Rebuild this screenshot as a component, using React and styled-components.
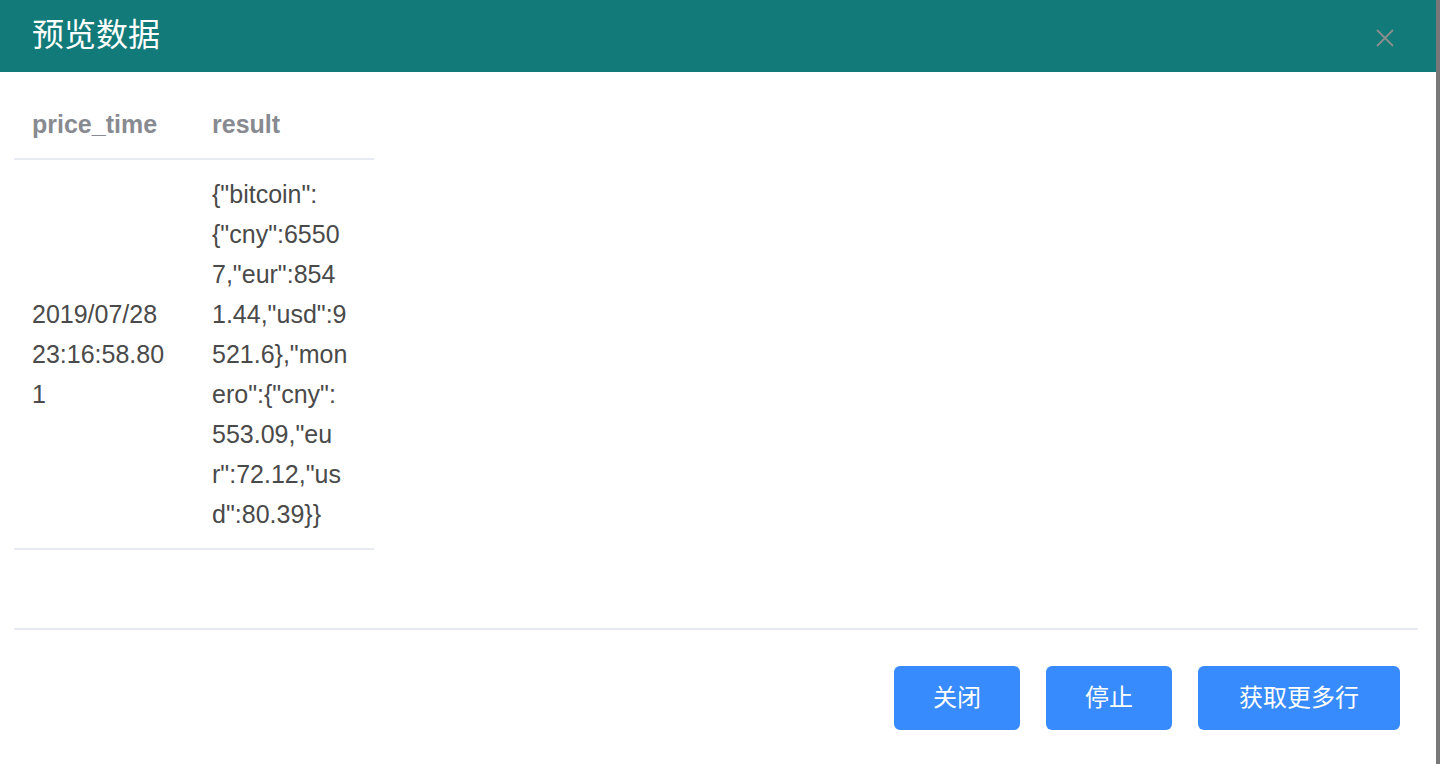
import React from "react";
import styled, { createGlobalStyle } from "styled-components";

const Global = createGlobalStyle`
  html, body { margin: 0; padding: 0; }
  body {
    background: #787878;
    font-family: "Liberation Sans", Arial, "Noto Sans CJK SC", sans-serif;
  }
`;

const Page = styled.div`
  height: 764px;
  display: flex;
`;

const Modal = styled.div`
  width: 1436px;
  height: 764px;
  background: #ffffff;
  display: flex;
  flex-direction: column;
`;

const Header = styled.div`
  height: 72px;
  flex: none;
  background: #127a78;
  display: flex;
  align-items: center;
  justify-content: space-between;
  padding: 0 40px 0 32px;
`;

const Title = styled.h1`
  margin: 0 0 8px 0;
  font-family: "Noto Sans CJK SC", sans-serif;
  font-weight: 400;
  font-size: 32px;
  color: #ffffff;
`;

const CloseButton = styled.button`
  border: 0;
  background: transparent;
  padding: 0;
  width: 22px;
  height: 22px;
  margin-top: 4px;
  display: flex;
  align-items: center;
  justify-content: center;
  cursor: pointer;
`;

const Body = styled.div`
  height: 558px;
  flex: none;
  margin: 0 18px 0 14px;
  padding-top: 18px;
  box-sizing: border-box;
  border-bottom: 2px solid #e6e9f0;
`;

const Table = styled.table`
  width: 360px;
  border-collapse: collapse;
  table-layout: fixed;
`;

const Th = styled.th`
  width: 180px;
  box-sizing: border-box;
  padding: 14px 18px;
  text-align: left;
  font-size: 25px;
  line-height: 40px;
  font-weight: 700;
  color: #888a91;
  border-bottom: 2px solid #e8eaf2;
`;

const Td = styled.td`
  box-sizing: border-box;
  padding: 14px 18px;
  vertical-align: middle;
  font-size: 25px;
  line-height: 40px;
  color: #4a4a4a;
  border-bottom: 2px solid #e8eaf2;
`;

const Line = styled.span`
  display: block;
  white-space: nowrap;
`;

const Footer = styled.div`
  display: flex;
  justify-content: flex-end;
  gap: 26px;
  padding: 36px 36px 0 0;
`;

const Button = styled.button`
  height: 64px;
  width: ${(p) => (p.$wide ? "202px" : "126px")};
  padding: 0 0 5px 0;
  border: 0;
  border-radius: 6px;
  background: #388bfd;
  color: #ffffff;
  font-family: "Noto Sans CJK SC", sans-serif;
  font-size: 24px;
  line-height: 1;
  cursor: pointer;
`;

const rows = [
  {
    time: ["2019/07/28", "23:16:58.80", "1"],
    result: [
      '{"bitcoin":',
      '{"cny":6550',
      '7,"eur":854',
      '1.44,"usd":9',
      '521.6},"mon',
      'ero":{"cny":',
      '553.09,"eu',
      'r":72.12,"us',
      'd":80.39}}',
    ],
  },
];

const CloseIcon = () => (
  <svg width="20" height="20" viewBox="0 0 20 20">
    <path d="M2 2 L18 18 M18 2 L2 18" stroke="#8a8e8e" strokeWidth="1.8" fill="none" />
  </svg>
);

export default function App() {
  return (
    <Page>
      <Global />
      <Modal>
        <Header>
          <Title>预览数据</Title>
          <CloseButton aria-label="close">
            <CloseIcon />
          </CloseButton>
        </Header>
        <Body>
          <Table>
            <thead>
              <tr>
                <Th>price_time</Th>
                <Th>result</Th>
              </tr>
            </thead>
            <tbody>
              {rows.map((r, i) => (
                <tr key={i}>
                  <Td>
                    {r.time.map((l, j) => (
                      <Line key={j}>{l}</Line>
                    ))}
                  </Td>
                  <Td>
                    {r.result.map((l, j) => (
                      <Line key={j}>{l}</Line>
                    ))}
                  </Td>
                </tr>
              ))}
            </tbody>
          </Table>
        </Body>
        <Footer>
          <Button>关闭</Button>
          <Button>停止</Button>
          <Button $wide>获取更多行</Button>
        </Footer>
      </Modal>
    </Page>
  );
}
